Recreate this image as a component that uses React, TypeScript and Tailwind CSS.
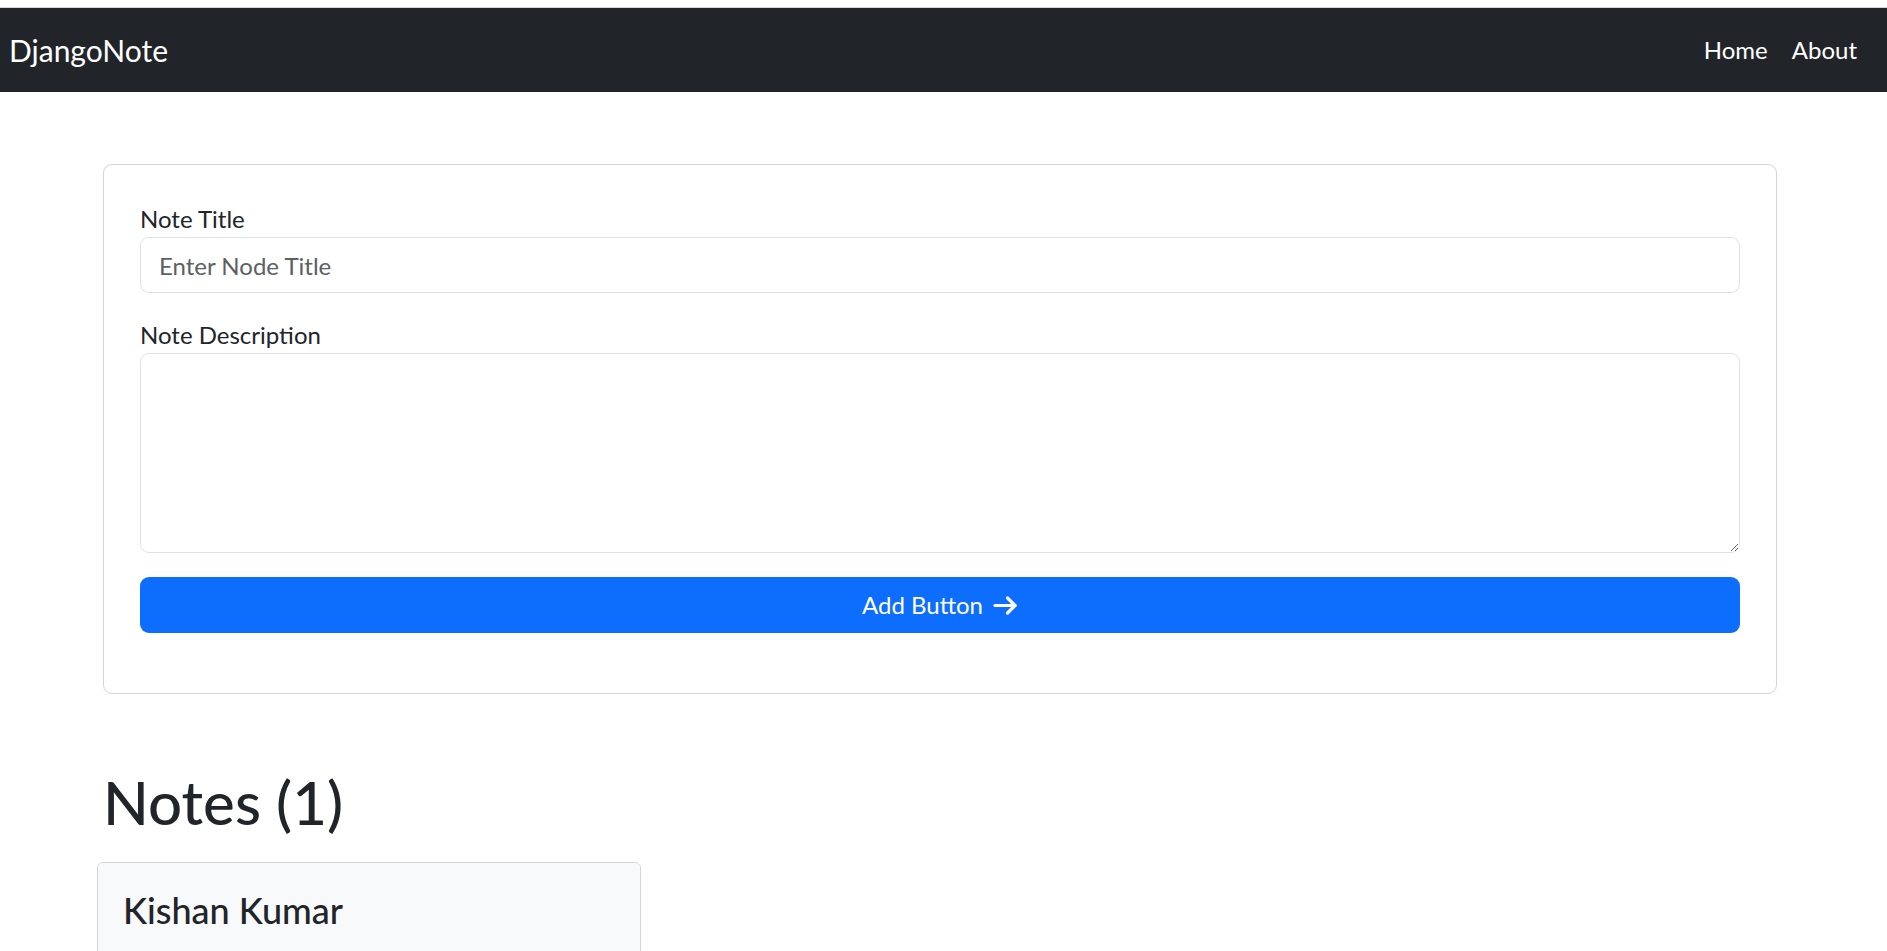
import { useState } from "react";

const font = "font-['Segoe_UI','Lato','Noto_Sans',sans-serif]";

function ArrowRight() {
  return (
    <svg width="25" height="19" viewBox="0 0 25 19" fill="none" stroke="currentColor" strokeWidth="3.2" strokeLinecap="round" strokeLinejoin="round">
      <path d="M2 9.5h20" />
      <path d="M14.5 2l7.5 7.5-7.5 7.5" />
    </svg>
  );
}

function Navbar() {
  return (
    <div className="pt-[7px] bg-white">
      <nav className="h-[85px] border-t border-[#d4d4d4] bg-[#212529] flex items-center justify-between pl-[9px] pr-[18px]">
        <a href="#" className="text-white text-[30px] leading-[45px]">
          DjangoNote
        </a>
        <ul className="flex items-center">
          <li>
            <a href="#" className="block px-[12px] text-white text-[24px] leading-[36px]">
              Home
            </a>
          </li>
          <li>
            <a href="#" className="block px-[12px] text-white text-[24px] leading-[36px]">
              About
            </a>
          </li>
        </ul>
      </nav>
    </div>
  );
}

function NoteForm() {
  const [title, setTitle] = useState("");
  const [desc, setDesc] = useState("");

  return (
    <form
      className="mt-[72px] border border-[#d3d4d5] rounded-[9px] p-[36px] pb-[60px]"
      onSubmit={(e) => e.preventDefault()}
    >
      <div className="mb-[24px]">
        <label htmlFor="title" className="block text-[24px] leading-[36px] text-[#212529]">
          Note Title
        </label>
        <input
          id="title"
          value={title}
          onChange={(e) => setTitle(e.target.value)}
          placeholder="Enter Node Title"
          className="block w-full h-[56px] px-[18px] border border-[#dee2e6] rounded-[9px] text-[24px] text-[#212529] placeholder:text-[#5c6064] outline-none"
        />
      </div>
      <div className="mb-[24px]">
        <label htmlFor="desc" className="block text-[24px] leading-[36px] text-[#212529]">
          Note Description
        </label>
        <textarea
          id="desc"
          value={desc}
          onChange={(e) => setDesc(e.target.value)}
          className="block w-full h-[200px] px-[18px] py-[9px] border border-[#dee2e6] rounded-[9px] text-[24px] text-[#212529] outline-none"
        />
      </div>
      <button
        type="submit"
        className="w-full h-[56px] rounded-[9px] bg-[#0d6efd] text-white text-[24px] flex items-center justify-center gap-[10px]"
      >
        Add Button
        <ArrowRight />
      </button>
    </form>
  );
}

export default function App() {
  return (
    <div className={`${font} min-h-screen bg-white text-[#212529]`}>
      <Navbar />
      <main className="w-[1674px] ml-[103px]">
        <NoteForm />

        <h1 className="mt-[72px] text-[60px] leading-[72px] font-medium">Notes (1)</h1>

        <div className="mt-[24px] -ml-[6px] w-[544px] border border-[#d3d4d5] rounded-t-[6px] overflow-hidden">
          <div className="bg-[#f8f9fa] pl-[25px] pr-[20px] pt-[26px] pb-[40px]">
            <h4 className="text-[36px] leading-[43px] font-medium">Kishan Kumar</h4>
          </div>
        </div>
      </main>
    </div>
  );
}
